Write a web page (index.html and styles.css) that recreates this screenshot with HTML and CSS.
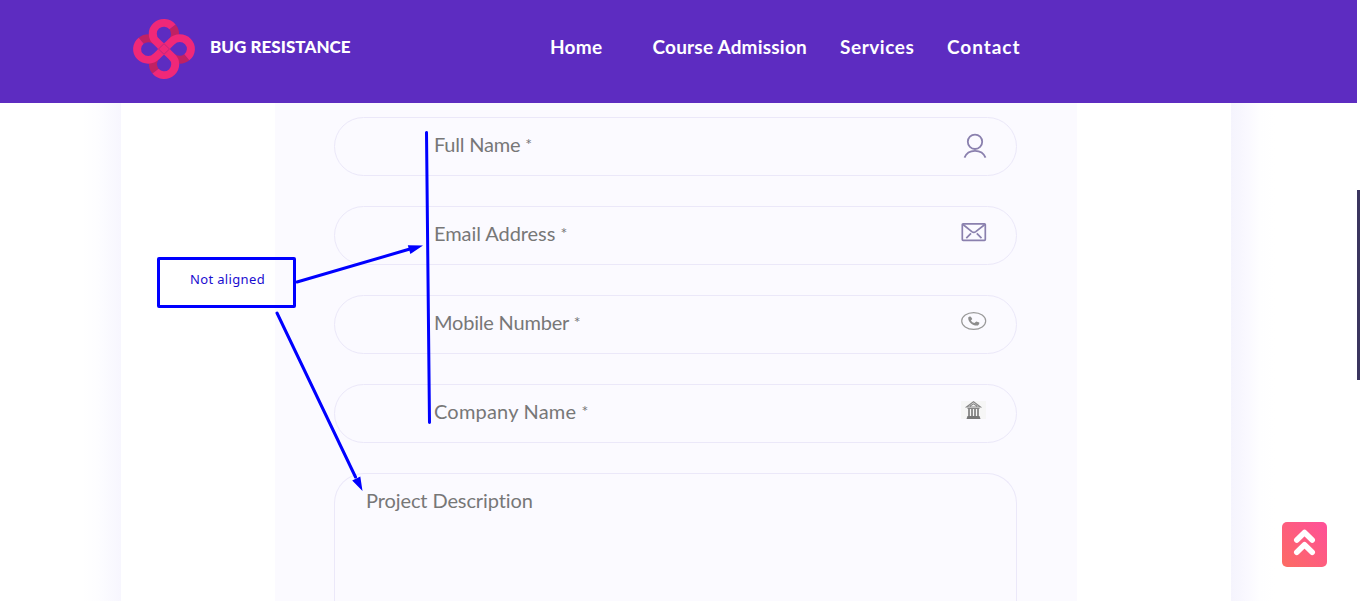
FILE: index.html
```html
<!DOCTYPE html>
<html lang="en">
<head>
<meta charset="utf-8">
<title>Bug Resistance</title>
<link rel="stylesheet" href="styles.css">
</head>
<body>
<header class="header">
  <a class="brand">
    <svg class="logo" width="64" height="62" viewBox="132 18 64 62" fill="none" stroke-width="8">
      <g transform="translate(0 1.47) scale(1 .97)">
        <g stroke="#c02163">
          <path id="fold" d="M172.5 26.2A11.1 11.1 0 0 1 171.7 41.3"/>
          <use href="#fold" transform="rotate(90 164 49)"/>
          <use href="#fold" transform="rotate(180 164 49)"/>
          <use href="#fold" transform="rotate(270 164 49)"/>
        </g>
        <g stroke="#f02878">
          <path id="loop" d="M164 49L156.3 41.3A11.1 11.1 0 1 1 172.5 26.2"/>
          <use href="#loop" transform="rotate(90 164 49)"/>
          <use href="#loop" transform="rotate(180 164 49)"/>
          <use href="#loop" transform="rotate(270 164 49)"/>
          <path d="M160 45l8 8M168 45l-8 8"/>
        </g>
        <path stroke="#b4267f" stroke-width=".9" d="M158.5 49l5.5-5.5 5.5 5.5-5.5 5.5z"/>
      </g>
    </svg>
    <span class="brand-name">BUG RESISTANCE</span>
  </a>
  <nav class="nav">
    <a class="home">Home</a><a class="course">Course Admission</a><a class="services">Services</a><a class="contact">Contact</a>
  </nav>
</header>
<main class="page">
  <div class="panel">
  <form class="form">
    <div class="field"><span class="full">Full Name <span class="star">*</span></span>
      <svg class="icon" width="26" height="26" viewBox="0 0 26 26" fill="none" stroke="#8a80ae" stroke-width="1.8"><circle cx="14" cy="8.8" r="7.2"/><path d="M3.5 24.6C7 15.5 21 15.5 24.5 24.6"/></svg>
    </div>
    <div class="field"><span class="email">Email Address <span class="star">*</span></span>
      <svg class="icon" width="26" height="20" viewBox="0 0 26 20" fill="none" stroke="#8a80ae" stroke-width="1.7"><rect x="1.3" y="1.8" width="23" height="16.5" rx=".8"/><path d="M2 2.5l8.8 7.1q2 1.4 4 0L23.8 2.5M10 11.3l-4.7 4.9M15.8 11.3l4.7 4.9"/></svg>
    </div>
    <div class="field"><span class="mobile">Mobile Number <span class="star">*</span></span>
      <svg class="icon" width="26" height="20" viewBox="0 0 26 20"><ellipse cx="12.7" cy="10" rx="12" ry="8.4" fill="none" stroke="#999" stroke-width="1.2"/><path fill="#8d8d8d" d="M7.2 6.4Q8.5 5 9.9 5.8L11.3 7.9 9.9 9.5Q11 11.8 13.4 12L15.3 10.6 18.3 11.5Q18.8 13.1 16.9 14.4C12.2 15.1 7 11.3 7.2 6.4Z"/></svg>
    </div>
    <div class="field"><span class="company">Company Name <span class="star">*</span></span>
      <svg class="icon" width="26" height="20" viewBox="0 0 26 20"><path fill="#f6f6f6" d="M0 1h25v18H0z"/><path fill="none" stroke="#858585" stroke-width="1.1" d="M5.5 7L12.5 1.7 19.5 7zM8.8 6.2L12.5 3.8l3.7 2.4M6.5 8.5h12"/><path fill="none" stroke="#858585" stroke-width="1.8" d="M8 9v7M11 9v7M14 9v7M17 9v7"/><path fill="#777" d="M6.5 16h12l1 3h-14z"/></svg>
    </div>
    <div class="field area"><span class="project">Project Description</span></div>
  </form>
  </div>
</main>
<div class="note">Not aligned</div>
<svg class="marks" width="1360" height="601" fill="none" stroke="#00f" stroke-width="3" stroke-linecap="round">
  <path d="M426.5 132.5L429.5 422.5M297 282L409 249.3M277 313L355.5 477"/>
  <path fill="#00f" stroke="none" d="M423 245.5L407.8 245.2 410.4 254ZM362.5 491L352.2 480.5 360.3 476.6Z"/>
</svg>
<a class="to-top"><svg width="45" height="45" viewBox="0 0 45 45" fill="none" stroke="#fff" stroke-width="5.6" stroke-linecap="round" stroke-linejoin="round"><path d="M14.8 18l7.7-7.5 7.7 7.5M14.8 30.3l7.7-7.5 7.7 7.5"/></svg></a>
<div class="thumb"></div>
</body>
</html>
```
FILE: styles.css
```css
* { box-sizing: border-box; }
body {
  margin: 0;
  height: 601px;
  overflow: hidden;
  position: relative;
  background: #fff;
  font-family: Lato, "Open Sans", sans-serif;
}
.header {
  display: flex;
  width: 1357px;
  height: 103px;
  padding-left: 132px;
  background: #5d2cc1;
  color: #fff;
}
.brand { display: flex; width: 418px; padding-top: 18px; }
.logo { flex: none; }
.brand-name {
  margin: 18px 0 0 14px;
  font-size: 17px;
  line-height: 22px;
  font-weight: 900;
  letter-spacing: .04px;
  white-space: nowrap;
}
.nav {
  display: flex;
  padding-top: 35px;
  font-size: 19px;
  line-height: 24px;
  font-weight: 700;
  white-space: nowrap;
}
.home { width: 102.5px; letter-spacing: .25px; }
.course { width: 187.5px; letter-spacing: .2px; }
.services { width: 107px; letter-spacing: .55px; }
.contact { letter-spacing: .95px; }
.page {
  width: 1357px;
  padding-left: 121px;
  background: linear-gradient(90deg, #fff 82px, #fdfdff 98px, #f7f6fe 121px, #f5f4fd 1231px, #faf9ff 1248px, #fefeff 1260px, #fff 1275px);
}
.panel {
  width: 1110px;
  height: 498px;
  padding-left: 154px;
  background: #fff;
}
.form {
  display: flex;
  flex-direction: column;
  gap: 30px;
  width: 802px;
  height: 498px;
  padding: 14px 60px 0 59px;
  background: #fbfaff;
}
.field {
  display: flex;
  flex: none;
  justify-content: space-between;
  height: 59px;
  padding: 13px 29px 0 99px;
  border: 1px solid #ebe8f9;
  border-radius: 30px;
  color: #777;
  font-size: 20px;
  line-height: 26px;
  white-space: nowrap;
}
.area {
  height: 128px;
  padding-left: 31px;
  border-bottom: 0;
  border-radius: 30px 30px 0 0;
}
.icon { margin-top: 2px; }
.star { font-size: 16px; vertical-align: 2px; line-height: 1; }
.full { letter-spacing: -.2px; }
.email { letter-spacing: -.06px; }
.mobile { letter-spacing: -.2px; }
.company { letter-spacing: .2px; }
.project { letter-spacing: -.1px; }
.note {
  position: absolute;
  left: 157px;
  top: 257px;
  width: 139px;
  height: 51px;
  padding: 10px 0 0 30px;
  border: 3px solid #00f;
  border-radius: 2px;
  color: #1a0dd0;
  font: 13px/18px "Noto Sans", sans-serif;
  letter-spacing: .35px;
}
.marks { position: absolute; left: 0; top: 0; z-index: 2; }
.to-top {
  position: absolute;
  left: 1282px;
  top: 522px;
  width: 45px;
  height: 45px;
  border-radius: 5px;
  background: linear-gradient(45deg, #fc6c62, #ff4f9a);
}
.thumb {
  position: absolute;
  left: 1357px;
  top: 190px;
  width: 3px;
  height: 190px;
  background: #3b355f;
}
```
